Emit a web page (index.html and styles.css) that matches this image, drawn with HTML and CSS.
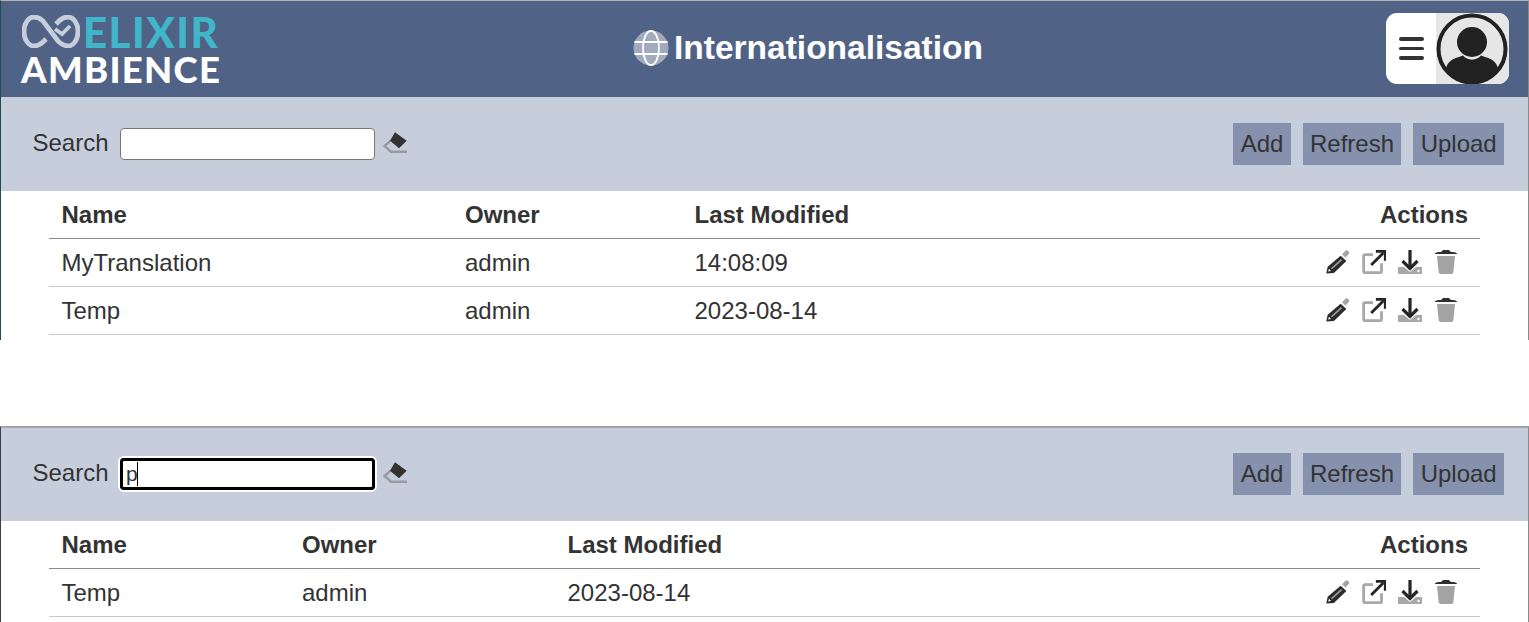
FILE: index.html
```html
<!DOCTYPE html>
<html lang="en">
<head>
<meta charset="utf-8">
<title>Internationalisation</title>
<link rel="stylesheet" href="styles.css">
</head>
<body>
<svg class="defs" width="0" height="0" aria-hidden="true">
  <defs>
    <symbol id="eraser" viewBox="0 0 26 24">
      <path d="M8.500 9.700 2.500 15 9 20.700h16" fill="none" stroke="#979aa0" stroke-width="2.400"/>
      <path d="M13 1.300 24.700 9.700 17 17.300 8 9.700z" fill="#333"/>
    </symbol>
    <symbol id="pencil" viewBox="1 1 24.500 25">
      <path d="M17.500 5.500 21 1.800c.8-.8 1.800-.8 2.500 0l1 1c.7.700.7 1.700 0 2.400L21 8.800z" fill="#a3a3a3"/>
      <path d="M16 7 22 12.500 9 25 1 25.500 2.500 18.500z" fill="#2b2b2b"/>
      <path d="M17 11 6.500 20.500" stroke="#a3a3a3" stroke-width="1.600"/>
      <path d="M3.800 20.500 6 23l-3 .5z" fill="#fff"/>
    </symbol>
    <symbol id="share" viewBox="0.500 0 25 25.500">
      <path d="M12 5H3.500A1.500 1.500 0 0 0 2 6.500v16A1.500 1.500 0 0 0 3.500 24h16a1.500 1.500 0 0 0 1.500-1.500V14" fill="none" stroke="#a8a8a8" stroke-width="3"/>
      <path d="M10 16 23 3" stroke="#252525" stroke-width="3"/>
      <path d="M15 1.500h10v10" fill="none" stroke="#252525" stroke-width="3"/>
    </symbol>
    <symbol id="download" viewBox="1 1 24 24">
      <path d="M1 18h6l6 5 6-5h6v7H1z" fill="#a8a8a8"/>
      <circle cx="21.500" cy="22" r="1.200" fill="#fff"/>
      <path d="M13 1v17" stroke="#252525" stroke-width="3.200"/>
      <path d="M5.500 12 13 19.500 20.500 12" fill="none" stroke="#252525" stroke-width="3.200"/>
    </symbol>
    <symbol id="trash" viewBox="1 1.500 22 24">
      <path d="M1 5.500c0-1.500 2-1.800 6.500-2.200L9 1.500h6l1.500 1.800c4.500.4 6.500.7 6.500 2.200z" fill="#2e2e2e"/>
      <path d="M3 7.500h18L19.300 24a2 2 0 0 1-2 1.500H6.700a2 2 0 0 1-2-1.500z" fill="#a3a3a3"/>
    </symbol>
  </defs>
</svg>

<section class="panel panel-first">
  <header class="topbar">
    <div class="logo">
      <div class="logo-top">
        <svg class="logo-mark" viewBox="0 0 58 33" aria-hidden="true">
          <path d="M24 24l-3 3c-3 3-6 4-9 4C6 31 2 24 2 16.500S6 2 12 2c4 0 7 2 9 4l15 20c3 3 6 5 10 5 6 0 10-7 10-14.500S52 2 46 2c-4 0-7 2-9 4l-3 3" fill="none" stroke="#c6cedc" stroke-width="4.800"/>
          <path d="M33 14l7 5 8-8" fill="none" stroke="#c6cedc" stroke-width="3.800"/>
        </svg>
        <span class="logo-elixir">ELIXIR</span>
      </div>
      <div class="logo-ambience">AMBIENCE</div>
    </div>
    <h1 class="title">
      <svg class="globe" viewBox="0 0 36 36" aria-hidden="true">
        <circle cx="18" cy="18" r="17.500" fill="#a2abbe"/>
        <ellipse cx="18" cy="18" rx="8" ry="17" fill="none" stroke="#fff" stroke-width="1.800"/>
        <path d="M1.500 12h33M1.500 24h33" stroke="#fff" stroke-width="2"/>
      </svg>
      <span>Internationalisation</span>
    </h1>
    <div class="user-menu">
      <div class="burger"><i></i><i></i><i></i></div>
      <div class="avatar">
        <svg viewBox="0 0 72 72" aria-hidden="true">
          <defs><clipPath id="round"><circle cx="36" cy="36" r="33"/></clipPath></defs>
          <circle cx="36" cy="36" r="33.500" fill="#e6e6e6" stroke="#222" stroke-width="4"/>
          <circle cx="36" cy="29" r="15" fill="#222"/>
          <path clip-path="url(#round)" d="M10 72V56c1-7 6-10 13-12l4-1.500c4 5.500 14 5.500 18 0l4 1.500c7 2 12 5 13 12v16z" fill="#222"/>
        </svg>
      </div>
    </div>
  </header>
  <div class="toolbar">
    <label class="search-label" for="s1">Search</label>
    <input class="search-input" id="s1" type="text">
    <svg class="eraser"><use href="#eraser"/></svg>
    <div class="buttons">
      <button class="btn">Add</button><button class="btn">Refresh</button><button class="btn">Upload</button>
    </div>
  </div>
  <table class="grid grid-wide">
    <thead>
      <tr><th class="c-name">Name</th><th class="c-owner">Owner</th><th class="c-mod">Last Modified</th><th class="c-act">Actions</th></tr>
    </thead>
    <tbody>
      <tr>
        <td>MyTranslation</td><td>admin</td><td>14:08:09</td>
        <td class="c-act"><span class="acts"><svg class="ic"><use href="#pencil"/></svg><svg class="ic"><use href="#share"/></svg><svg class="ic"><use href="#download"/></svg><svg class="ic"><use href="#trash"/></svg></span></td>
      </tr>
      <tr>
        <td>Temp</td><td>admin</td><td>2023-08-14</td>
        <td class="c-act"><span class="acts"><svg class="ic"><use href="#pencil"/></svg><svg class="ic"><use href="#share"/></svg><svg class="ic"><use href="#download"/></svg><svg class="ic"><use href="#trash"/></svg></span></td>
      </tr>
    </tbody>
  </table>
</section>

<section class="panel panel-second">
  <div class="toolbar">
    <label class="search-label" for="s2">Search</label>
    <div class="search-input search-focus" id="s2"><span>p</span><b class="caret"></b></div>
    <svg class="eraser"><use href="#eraser"/></svg>
    <div class="buttons">
      <button class="btn">Add</button><button class="btn">Refresh</button><button class="btn">Upload</button>
    </div>
  </div>
  <table class="grid grid-narrow">
    <thead>
      <tr><th class="c-name">Name</th><th class="c-owner">Owner</th><th class="c-mod">Last Modified</th><th class="c-act">Actions</th></tr>
    </thead>
    <tbody>
      <tr>
        <td>Temp</td><td>admin</td><td>2023-08-14</td>
        <td class="c-act"><span class="acts"><svg class="ic"><use href="#pencil"/></svg><svg class="ic"><use href="#share"/></svg><svg class="ic"><use href="#download"/></svg><svg class="ic"><use href="#trash"/></svg></span></td>
      </tr>
    </tbody>
  </table>
</section>
</body>
</html>
```

FILE: styles.css
```css
* { box-sizing: border-box; }
html, body { margin: 0; padding: 0; height: 622px; overflow: hidden; background: #fff; }
body { font-family: "Liberation Sans", Arial, sans-serif; font-size: 24px; color: #333; }
.defs { position: absolute; }

.panel { width: 1529px; border-left: 1px solid #1d4a55; border-right: 1px solid #8a8a8a; overflow: hidden; }
.panel-first { height: 340px; border-top: 1px solid #b5b5b5; }
.panel-second { height: 196px; margin-top: 86px; border-top: 2px solid #a3a3a3; border-left-color: #3a3f45; }

.topbar { height: 96px; background: #506285; display: flex; align-items: center; justify-content: space-between; padding: 0 19px 0 20px; position: relative; }
.logo { width: 205px; align-self: flex-start; margin-top: 14px; color: #fff; }
.logo-top { display: flex; align-items: center; height: 34px; }
.logo-mark { width: 58px; height: 33px; flex: none; margin: -2px 3px 0 1px; }
.logo-elixir { color: #41b6c8; font-family: Lato, sans-serif; font-weight: 900; font-size: 42px; line-height: 34px; letter-spacing: 1.500px; }
.logo-ambience { font-family: Lato, sans-serif; font-weight: 900; font-size: 36.500px; line-height: 36px; letter-spacing: 1.300px; margin-top: 2px; white-space: nowrap; }
.title { position: absolute; left: 632px; top: 28px; margin: 0; display: flex; align-items: center; gap: 5px; font-size: 33.500px; line-height: 37px; font-weight: 700; color: #fff; }
.globe { width: 36px; height: 36px; flex: none; }
.user-menu { display: flex; width: 123px; height: 71px; margin-bottom: 1px; border-radius: 11px; overflow: hidden; background: #fff; }
.burger { width: 50px; display: flex; flex-direction: column; justify-content: center; align-items: center; gap: 6px; padding-left: 1px; }
.burger i { display: block; width: 25px; height: 3.500px; border-radius: 2px; background: #333; }
.avatar { width: 73px; background: #e6e6e6; display: flex; align-items: center; }
.avatar svg { width: 72px; height: 72px; }

.toolbar { height: 94px; background: #c6cedc; display: flex; align-items: center; padding: 0 24px 0 31.500px; }
.panel-second .toolbar { height: 93px; padding-bottom: 1px; }
.search-label { margin-right: 11.500px; line-height: 28px; position: relative; top: -1px; }
.search-input { width: 255px; height: 32px; border: 1px solid #767676; border-radius: 4px; background: #fff; padding: 0; font: inherit; }
.search-focus { display: flex; align-items: center; padding-left: 5px; font-size: 21px; outline: 3px solid #000; outline-offset: -3px; box-shadow: 0 0 0 2px #fff; border-color: #000; color: #333; }
.caret { display: block; width: 1.500px; height: 24px; background: #000; margin-left: -1px; }
.eraser { width: 26px; height: 24px; margin-left: 7px; position: relative; top: -1px; flex: none; }
.buttons { margin-left: auto; display: flex; gap: 12px; }
.btn { height: 42px; padding: 0 7.300px; border: 0; background: #8591ad; color: #333; font: inherit; }

.grid { width: 1431px; margin-left: 48px; border-collapse: collapse; table-layout: fixed; }
.grid th, .grid td { padding: 0 12px 0 12.500px; text-align: left; line-height: 28px; white-space: nowrap; }
.grid th { height: 47px; padding-top: 1px; border-bottom: 1px solid #8c8c8c; font-weight: 700; }
.grid td { height: 48px; padding-top: 1px; border-bottom: 1px solid #c9c9c9; }
.grid th.c-act, .grid td.c-act { text-align: right; width: 250px; }
.grid-wide .c-name { width: 403.500px; }
.grid-wide .c-owner { width: 229.500px; }
.grid-narrow .c-name { width: 240.500px; }
.grid-narrow .c-owner { width: 265.500px; }
.acts { display: inline-flex; gap: 12px; vertical-align: middle; padding-right: 10px; margin-bottom: 3px; }
.ic { width: 24px; height: 24px; flex: none; }
```
